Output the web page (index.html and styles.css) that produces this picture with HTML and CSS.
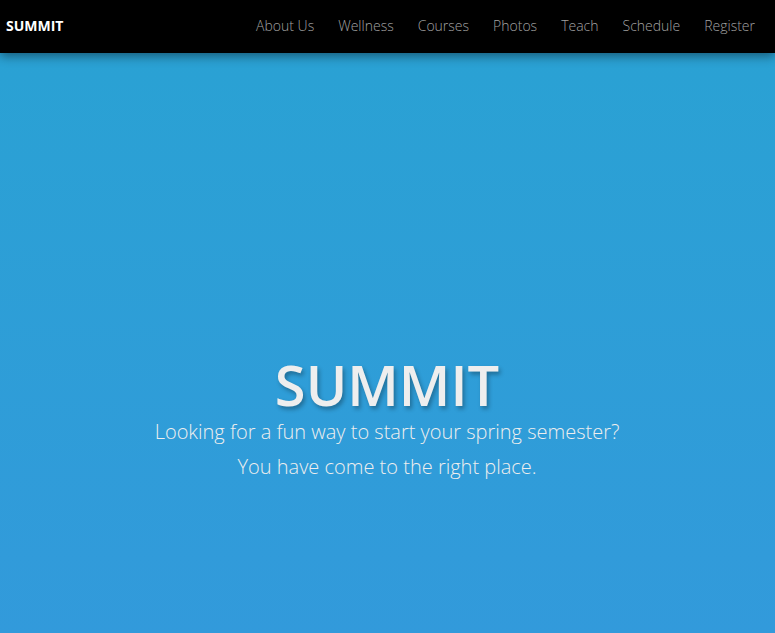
FILE: index.html
```html
<!DOCTYPE html>
<html>
<head>
<meta charset="utf-8">
<link rel="stylesheet" href="styles.css">
</head>
<body>
<header class="navbar">
  <a class="brand">SUMMIT</a>
  <nav class="links">
    <a>About Us</a>
    <a>Wellness</a>
    <a>Courses</a>
    <a>Photos</a>
    <a>Teach</a>
    <a>Schedule</a>
    <a>Register</a>
  </nav>
</header>
<main class="hero">
  <div class="hero-content">
    <h1 class="title">SUMMIT</h1>
    <p class="sub">Looking for a fun way to start your spring semester?</p>
    <p class="sub">You have come to the right place.</p>
  </div>
</main>
</body>
</html>
```
FILE: styles.css
```css
* { box-sizing: border-box; }
html, body { margin: 0; padding: 0; height: 100%; }
body {
  font-family: "Open Sans", "Liberation Sans", sans-serif;
  background: linear-gradient(to bottom, #29a2d3 0%, #329adb 100%);
  overflow: hidden;
}
.navbar {
  position: relative;
  z-index: 2;
  height: 53px;
  background: #000;
  display: flex;
  align-items: center;
  justify-content: space-between;
  padding: 0 8px 3px 6px;
  box-shadow: 0 3px 10px rgba(0,0,0,0.45);
}
.brand {
  color: #fff;
  font-weight: 700;
  font-size: 14px;
}
.links {
  display: flex;
  gap: 24px;
  padding-right: 12px;
}
.links a {
  color: #a2a2a2;
  font-weight: 300;
  font-size: 14px;
}
.hero {
  height: calc(100% - 53px);
  display: flex;
  justify-content: center;
  padding-top: 301px;
}
.hero-content {
  text-align: center;
  color: #eeeeee;
  padding-right: 1px;
}
.title {
  margin: 0;
  font-size: 56px;
  font-weight: 600;
  line-height: 60px;
  text-shadow: 2px 3px 4px rgba(0,0,0,0.3);
}
.sub {
  margin: 0;
  font-size: 20px;
  font-weight: 300;
  line-height: 35px;
}
```
